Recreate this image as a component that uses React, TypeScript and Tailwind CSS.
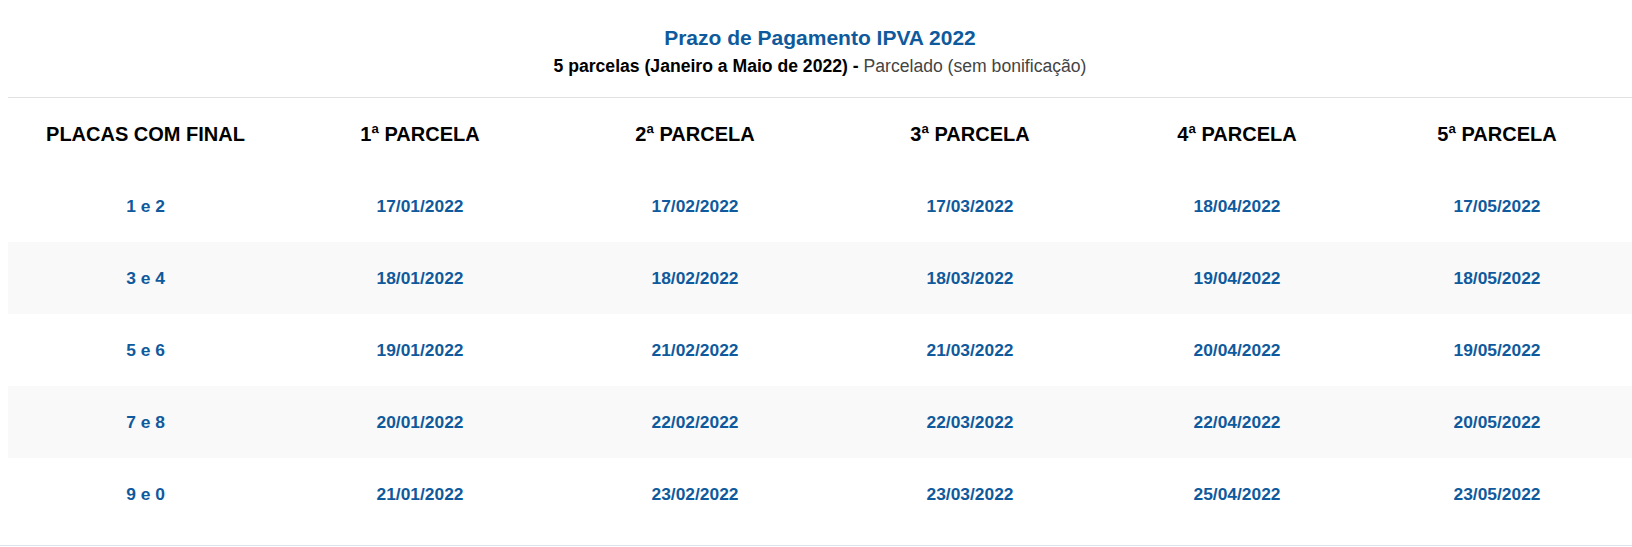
import React from "react";

const rows: string[][] = [
  ["1 e 2", "17/01/2022", "17/02/2022", "17/03/2022", "18/04/2022", "17/05/2022"],
  ["3 e 4", "18/01/2022", "18/02/2022", "18/03/2022", "19/04/2022", "18/05/2022"],
  ["5 e 6", "19/01/2022", "21/02/2022", "21/03/2022", "20/04/2022", "19/05/2022"],
  ["7 e 8", "20/01/2022", "22/02/2022", "22/03/2022", "22/04/2022", "20/05/2022"],
  ["9 e 0", "21/01/2022", "23/02/2022", "23/03/2022", "25/04/2022", "23/05/2022"],
];

const headers = ["PLACAS COM FINAL", "1ª PARCELA", "2ª PARCELA", "3ª PARCELA", "4ª PARCELA", "5ª PARCELA"];

const cols = "grid grid-cols-[275px_274px_276px_274px_260px_260px]";

export default function App() {
  return (
    <div
      className="w-[1632px] h-[547px] bg-white overflow-hidden flex flex-col"
      style={{ fontFamily: '"Liberation Sans", Arial, sans-serif' }}
    >
      <div className="pl-[8px] flex flex-col">
        <div className="pt-[25px] pb-[21px] flex flex-col items-center border-b border-[#e0e0e0]">
          <h1 className="text-[21px] leading-[25px] font-bold text-[#0f5a9c]">
            Prazo de Pagamento IPVA 2022
          </h1>
          <p className="mt-[6px] text-[17.6px] leading-[20px] text-[#444444]">
            <span className="font-bold text-black">5 parcelas (Janeiro a Maio de 2022) -</span> Parcelado (sem bonificação)
          </p>
        </div>
        <div className="flex flex-col">
          <div className={`${cols} h-[72px] items-center`}>
            {headers.map((h) => (
              <div key={h} className="text-center font-bold text-[20px] text-black">
                {h}
              </div>
            ))}
          </div>
          {rows.map((r, i) => (
            <div
              key={i}
              className={`${cols} h-[72px] items-center ${i % 2 === 1 ? "bg-[#f9f9f9]" : "bg-white"}`}
            >
              {r.map((c, j) => (
                <div key={j} className="text-center font-bold text-[17.4px] text-[#0f5a9c]">
                  {c}
                </div>
              ))}
            </div>
          ))}
        </div>
      </div>
      <div className="mt-[15px] border-b border-[#dde3ea]" />
    </div>
  );
}
